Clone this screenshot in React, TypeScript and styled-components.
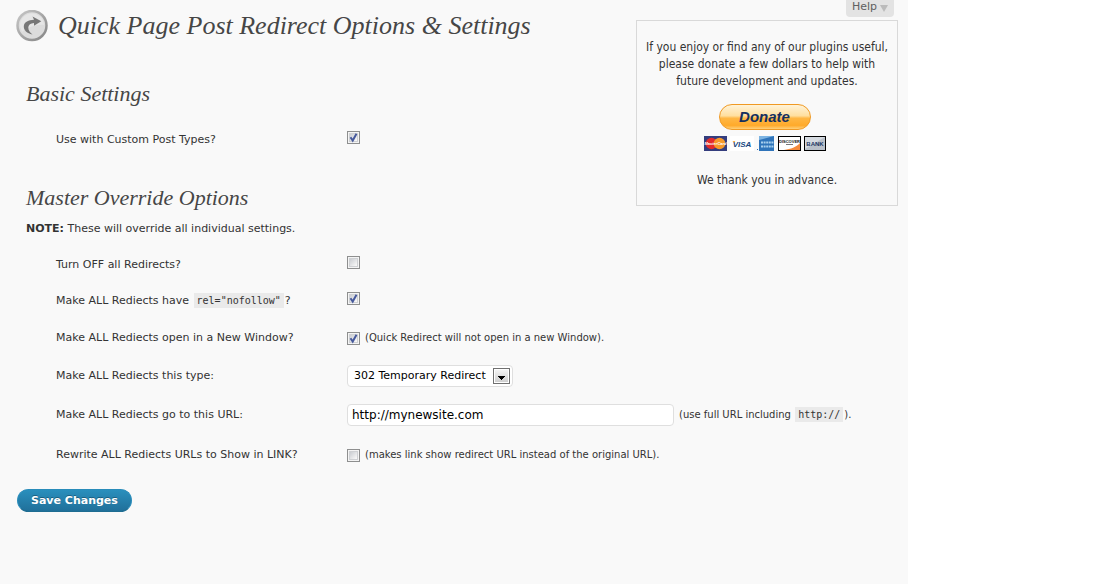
import React from "react";
import styled, { createGlobalStyle } from "styled-components";

const serif = `"Liberation Serif", Georgia, serif`;
const sans = `"DejaVu Sans", Verdana, sans-serif`;
const condensed = `"DejaVu Sans Condensed", Tahoma, sans-serif`;
const mono = `"DejaVu Sans Mono", Consolas, monospace`;

const GlobalStyle = createGlobalStyle`
  *, *::before, *::after { box-sizing: border-box; }
  body {
    margin: 0;
    background: #fff;
    color: #333;
    font: 11px/16px ${sans};
  }
`;

const Page = styled.div`
  display: flex;
  align-items: flex-start;
  min-height: 100vh;
  width: calc(100% - 190px);
  min-width: 760px;
  padding: 0 10px 0 16px;
  background: #f9f9f9;
`;

const Main = styled.main`
  flex: 1;
  min-width: 0;
  white-space: nowrap;
`;

const TitleBar = styled.header`
  display: flex;
  align-items: center;
  gap: 10px;
  height: 52px;
`;

const Title = styled.h1`
  margin: 0;
  color: #464646;
  font: italic 26px/36px ${serif};
`;

const Section = styled.section<{ $gap: number }>`
  padding: ${(p) => p.$gap}px 0 0 10px;
`;

const SectionTitle = styled.h2`
  margin: 0;
  color: #464646;
  font: italic 22px/28px ${serif};
`;

const Note = styled.p`
  margin: 9px 0 10px;
`;

const Rows = styled.div`
  padding-left: 30px;
`;

const Row = styled.div<{ $height: number }>`
  display: grid;
  grid-template-columns: 291px 1fr;
  align-items: center;
  min-height: ${(p) => p.$height}px;
`;

const Control = styled.div<{ $raised?: boolean }>`
  display: flex;
  align-items: center;
  gap: 5px;
  padding-bottom: ${(p) => (p.$raised ? 5 : 0)}px;
`;

const Hint = styled.label`
  font-size: 10px;
`;

const Code = styled.code`
  display: inline-block;
  margin: 0 1px;
  padding: 0 3px;
  background: #eaeaea;
  font: 10px/15px ${mono};
`;

const TickWrap = styled.span`
  display: grid;
  flex: none;
  width: 13px;
  height: 13px;

  > * {
    grid-area: 1 / 1;
  }

  svg {
    pointer-events: none;
    visibility: hidden;
  }

  input:checked + svg {
    visibility: visible;
  }
`;

const TickInput = styled.input`
  appearance: none;
  width: 13px;
  height: 13px;
  margin: 0;
  border: 1px solid #8e8f8f;
  background: linear-gradient(135deg, #bcc0c6, #f6f6f6 75%);
  box-shadow: inset 0 0 0 1px #f4f4f4, inset 0 0 0 2px #cfd1d4;
`;

const SelectWrap = styled.div`
  display: grid;
  align-items: center;
  width: 166px;

  > * {
    grid-area: 1 / 1;
  }

  svg {
    justify-self: end;
    margin-right: 3px;
    pointer-events: none;
  }
`;

const Select = styled.select`
  appearance: none;
  width: 100%;
  height: 22px;
  margin: 0;
  padding: 0 0 0 6px;
  border: 1px solid #dfdfdf;
  border-radius: 4px;
  background: #fff;
  color: #000;
  font: 11px/18px ${sans};
`;

const TextInput = styled.input`
  width: 327px;
  height: 22px;
  padding: 0 4px;
  border: 1px solid #dfdfdf;
  border-radius: 4px;
  background: #fff;
  color: #000;
  font: 12px/18px ${sans};
`;

const SaveButton = styled.button`
  display: block;
  height: 23px;
  margin: 14px 0 0 1px;
  padding: 0 13px;
  border: 1px solid #298cba;
  border-bottom-color: #1f6d92;
  border-radius: 12px;
  background: linear-gradient(#2a8fbd, #20709a);
  color: #fff;
  font: bold 11px/20px ${sans};
  text-shadow: 0 -1px 0 rgba(0, 0, 0, 0.3);
`;

const Aside = styled.aside`
  display: flex;
  flex: none;
  flex-direction: column;
  gap: 3px;
  width: 262px;
`;

const HelpButton = styled.button`
  display: flex;
  align-self: flex-end;
  align-items: center;
  gap: 3px;
  height: 17px;
  margin-right: 4px;
  padding: 0 6px 4px;
  border: 0;
  border-radius: 0 0 4px 4px;
  background: #e3e3e3;
  color: #606060;
  font: 11px/13px ${sans};

  svg {
    margin-top: 3px;
  }
`;

const DonateBox = styled.section`
  height: 186px;
  padding: 18px 0 16px;
  border: 1px solid #d9d9d9;
  font: 12px/17px ${condensed};
  text-align: center;
`;

const DonateText = styled.p`
  margin: 0;
`;

const DonateActions = styled.div`
  display: flex;
  flex-direction: column;
  align-items: center;
  gap: 6px;
  margin: 14px 5px 21px 0;
`;

const DonateButton = styled.button`
  width: 92px;
  height: 26px;
  padding: 0;
  border: 1px solid #f09a24;
  border-radius: 13px;
  background: linear-gradient(#fff3d8, #ffdf9f 45%, #ffb744 55%, #ffaa2b 85%, #ffd079);
  color: #152f5f;
  font: italic bold 15px/22px "Liberation Sans", Arial, sans-serif;
`;

function RedirectIcon() {
  return (
    <svg width="32" height="32" viewBox="0 0 32 32" aria-hidden="true">
      <defs>
        <linearGradient id="ring" x1="0" y1="0" x2="1" y2="1">
          <stop offset="0" stopColor="#c8c8c8" />
          <stop offset="1" stopColor="#858585" />
        </linearGradient>
      </defs>
      <circle cx="16" cy="15.500" r="14.500" fill="#dcdcdc" stroke="url(#ring)" strokeWidth="2.500" />
      <path d="M4 16a12 12 0 0 1 24-1C20 14 12 17 6 22Z" fill="#e6e6e6" />
      <path
        d="M16.500 24.500C11 23.500 7.500 20 7.800 16C8.300 12 12.500 10 18 9.800L16.500 6.500L25.300 11.300L18 15.800L18 12.900C14.500 13.200 12.500 14.700 12.300 17.300C12.200 20 13.500 22.500 16.500 24.500Z"
        fill="#777"
      />
    </svg>
  );
}

function Cards() {
  const face = `"Liberation Sans", Arial, sans-serif`;
  return (
    <svg width="122" height="15" viewBox="0 0 122 15" role="img" aria-label="Accepted cards">
      <rect width="23" height="15" fill="#343d7d" />
      <circle cx="7.500" cy="7.500" r="5.800" fill="#e32b2b" />
      <circle cx="15.500" cy="7.500" r="5.800" fill="#f79a2a" />
      <text x="11.500" y="9" textAnchor="middle" fontFamily={face} fontSize="4" fontWeight="bold" fontStyle="italic" fill="#fff">MasterCard</text>

      <rect x="26" width="24" height="15" fill="#fff" />
      <text x="38" y="11" textAnchor="middle" fontFamily={face} fontSize="8" fontWeight="bold" fontStyle="italic" fill="#17477f">VISA</text>
      <path d="M28.300 5h3l-1 1.600z" fill="#f1a832" />

      <rect x="55" width="15" height="15" fill="#2f74ba" />
      <path d="M55 0h15l-15 4z" fill="#7db4e2" />
      <path d="M57 6.500h13M57 10.500h13" stroke="#a9d0ee" strokeWidth="2" strokeDasharray="2 .6" />
      <rect x="53" y="13" width="1" height="1" fill="#2f74ba" />

      <rect x="74.500" y=".5" width="22" height="14" fill="#fff" stroke="#000" />
      <path d="M96 7v7H80C87 13 92 11 96 7Z" fill="#f58a3c" />
      <text x="85.500" y="6.500" textAnchor="middle" fontFamily={face} fontSize="4" fontWeight="bold" fill="#111">DISCOVER</text>
      <path d="M82 8.500h7" stroke="#777" />

      <rect x="100.500" y=".5" width="21" height="14" fill="#b9c0c9" stroke="#000" />
      <path d="M101 1h20l-20 12z" fill="#d5dae0" />
      <text x="111" y="9.500" textAnchor="middle" fontFamily={face} fontSize="6" fontWeight="bold" fill="#1d3763">BANK</text>
    </svg>
  );
}

function Tick({ id, checked }: { id: string; checked?: boolean }) {
  return (
    <TickWrap>
      <TickInput type="checkbox" id={id} defaultChecked={checked} />
      <svg width="13" height="13" viewBox="0 0 13 13" aria-hidden="true">
        <path d="M3.500 6.300L5.700 9.500L9.500 2.800" fill="none" stroke="#46599c" strokeWidth="2" />
      </svg>
    </TickWrap>
  );
}

export default function App() {
  return (
    <>
      <GlobalStyle />
      <Page>
        <Main>
          <TitleBar>
            <RedirectIcon />
            <Title>Quick Page Post Redirect Options &amp; Settings</Title>
          </TitleBar>
          <form onSubmit={(e) => e.preventDefault()}>
            <Section $gap={28}>
              <SectionTitle>Basic Settings</SectionTitle>
              <Rows>
                <Row $height={64}>
                  <label htmlFor="types">Use with Custom Post Types?</label>
                  <Control $raised><Tick id="types" checked /></Control>
                </Row>
              </Rows>
            </Section>
            <Section $gap={12}>
              <SectionTitle>Master Override Options</SectionTitle>
              <Note><strong>NOTE:</strong> These will override all individual settings.</Note>
              <Rows>
                <Row $height={36}>
                  <label htmlFor="off">Turn OFF all Redirects?</label>
                  <Control $raised><Tick id="off" /></Control>
                </Row>
                <Row $height={36}>
                  <label htmlFor="nofollow">Make ALL Rediects have <Code>rel="nofollow"</Code>?</label>
                  <Control $raised><Tick id="nofollow" checked /></Control>
                </Row>
                <Row $height={38}>
                  <label htmlFor="window">Make ALL Rediects open in a New Window?</label>
                  <Control>
                    <Tick id="window" checked />
                    <Hint htmlFor="window">(Quick Redirect will not open in a new Window).</Hint>
                  </Control>
                </Row>
                <Row $height={38}>
                  <label htmlFor="type">Make ALL Rediects this type:</label>
                  <SelectWrap>
                    <Select id="type" defaultValue="302">
                      <option value="302">302 Temporary Redirect</option>
                      <option value="301">301 Permanent Redirect</option>
                    </Select>
                    <svg width="17" height="16" viewBox="0 0 17 16" aria-hidden="true">
                      <defs>
                        <linearGradient id="drop" x1="0" y1="0" x2="0" y2="1">
                          <stop offset="0" stopColor="#f3f3f3" />
                          <stop offset="1" stopColor="#cfcfcf" />
                        </linearGradient>
                      </defs>
                      <rect x=".5" y=".5" width="16" height="15" fill="#fff" stroke="#707070" />
                      <rect x="2" y="2" width="13" height="12" fill="url(#drop)" />
                      <path d="M5 8h7v1h-1v1h-1v1h-1v1H8v-1H7v-1H6V9H5z" fill="#000" />
                    </svg>
                  </SelectWrap>
                </Row>
                <Row $height={40}>
                  <label htmlFor="url">Make ALL Rediects go to this URL:</label>
                  <Control>
                    <TextInput id="url" type="text" defaultValue="http://mynewsite.com" />
                    <Hint htmlFor="url">(use full URL including <Code>http://</Code>).</Hint>
                  </Control>
                </Row>
                <Row $height={40}>
                  <label htmlFor="link">Rewrite ALL Rediects URLs to Show in LINK?</label>
                  <Control>
                    <Tick id="link" />
                    <Hint htmlFor="link">(makes link show redirect URL instead of the original URL).</Hint>
                  </Control>
                </Row>
              </Rows>
            </Section>
            <SaveButton type="submit">Save Changes</SaveButton>
          </form>
        </Main>
        <Aside>
          <HelpButton type="button">
            Help
            <svg width="8" height="7" viewBox="0 0 8 7" aria-hidden="true">
              <path d="M0 0h8L4 7z" fill="#bbb" />
            </svg>
          </HelpButton>
          <DonateBox>
            <DonateText>
              If you enjoy or find any of our plugins useful,
              <br />
              please donate a few dollars to help with
              <br />
              future development and updates.
            </DonateText>
            <DonateActions>
              <DonateButton type="button">Donate</DonateButton>
              <Cards />
            </DonateActions>
            <DonateText>We thank you in advance.</DonateText>
          </DonateBox>
        </Aside>
      </Page>
    </>
  );
}
